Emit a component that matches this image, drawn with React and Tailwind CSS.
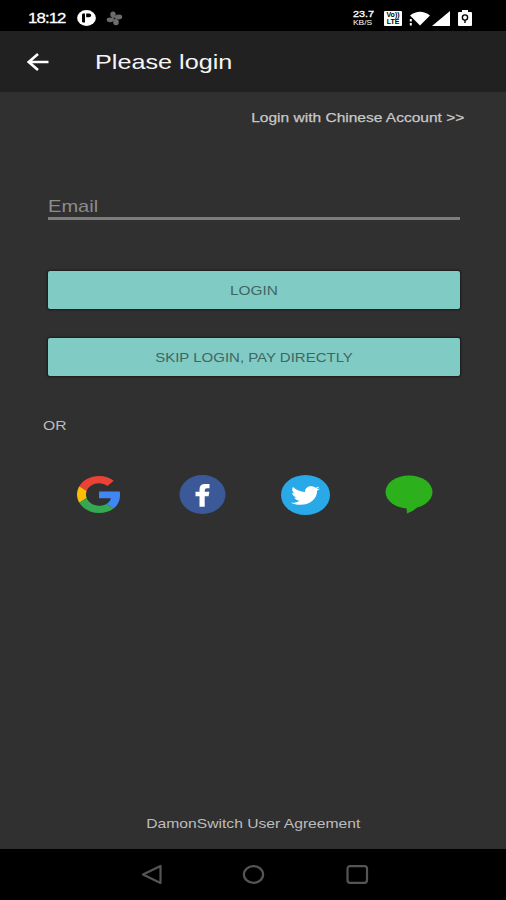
import { FaTwitter } from "react-icons/fa";
import clsx from "clsx";

// the whole screen uses a wide grotesque
const Wide = ({ className, children }) => (
  <span
    className={clsx("inline-block whitespace-nowrap leading-none", className)}
  >
    {children}
  </span>
);

const StatusBar = () => (
  <div className="h-[31px] shrink-0 bg-black flex items-center justify-between pl-7 pr-[34px] pt-[5px] text-white">
    <div className="flex items-center">
      <div className="w-[49px]">
        <Wide className="text-[15px] tracking-[-0.8px] origin-left scale-x-[1.12] [-webkit-text-stroke:0.3px_white]">
          18:12
        </Wide>
      </div>
      <svg width="19" height="16" viewBox="0 0 19 16">
        <ellipse cx="9.5" cy="8" rx="9.4" ry="7.9" fill="#fff" />
        <path d="M5 5Q5 3.6 6.4 3.6H8V12.6H6.4Q5 12.6 5 11.2Z" fill="#000" />
        <path d="M9.2 3.6H12Q14.2 3.6 14.2 5.4T12 7.2H9.2Z" fill="#000" />
      </svg>
      <svg width="17" height="15" viewBox="0 0 17 15" className="ml-[10px]">
        <g fill="#6c6c6c">
          <ellipse cx="7" cy="3.6" rx="2.7" ry="3" />
          <ellipse cx="12.7" cy="6" rx="3.5" ry="2.4" />
          <ellipse cx="10" cy="11.2" rx="2.8" ry="3" />
          <ellipse cx="4.2" cy="8.8" rx="3.5" ry="2.4" />
          <circle cx="8.5" cy="7.4" r="2.5" />
        </g>
        <circle cx="8.5" cy="7.4" r="1" fill="#222" />
      </svg>
    </div>
    <div className="flex items-center">
      <div className="w-[31px] flex flex-col items-start">
        <Wide className="text-[9px] leading-[8px] origin-left scale-x-[1.2] [-webkit-text-stroke:0.3px_white]">
          23.7
        </Wide>
        <Wide className="text-[7px] leading-[7px] origin-left scale-x-[1.2]">
          KB/S
        </Wide>
      </div>
      <div className="w-[18px] h-[15px] bg-white text-black rounded-[1px] flex flex-col items-center justify-center font-bold">
        <Wide className="text-[7px] leading-[7px]">Vo))</Wide>
        <Wide className="text-[7px] leading-[7px]">LTE</Wide>
      </div>
      <svg width="21" height="15" viewBox="0 0 21 15" className="ml-[7px]">
        <path d="M1 4.5Q11 -3 21 4.5L11 14.5Z" fill="#fff" />
        <path d="M0 7H4V15H0Z" fill="#000" />
        <path d="M1.8 8V10.5M1.8 12V14.5" stroke="#fff" strokeWidth="2" />
      </svg>
      <svg width="18" height="15" viewBox="0 0 18 15" className="ml-[2px]">
        <path d="M18 0V15H0Z" fill="#fff" />
      </svg>
      <svg width="14" height="16" viewBox="0 0 14 16" className="ml-2">
        <path d="M1 2H4V0H10V2H13Q14 2 14 3V15Q14 16 13 16H1Q0 16 0 15V3Q0 2 1 2Z" fill="#fff" />
        <ellipse cx="7" cy="7.5" rx="2.6" ry="2.6" fill="none" stroke="#000" strokeWidth="1.4" />
        <path d="M7 10V13" stroke="#000" strokeWidth="1.4" />
      </svg>
    </div>
  </div>
);

const Header = () => (
  <div className="h-[61px] shrink-0 bg-[#212121] flex items-center pl-[27px]">
    <svg width="22" height="18" viewBox="0 0 22 18" fill="none" stroke="#fff" strokeWidth="2.6">
      <path d="M1.5 9H21.5M11 1L1.7 9L11 17" />
    </svg>
    <Wide className="ml-[46px] text-[21px] text-[#f5f5f5] origin-left scale-x-[1.2]">
      Please login
    </Wide>
  </div>
);

const Button = ({ className, children }) => (
  <button className="h-[38px] w-full pt-[2px] rounded-[2px] bg-[#80cbc4] text-[#3f6663] shadow-[0_0_2px_1px_#1d1a1c] flex items-center justify-center">
    <Wide className={clsx("text-[13.5px]", className)}>{children}</Wide>
  </button>
);

const GoogleIcon = () => (
  <svg width="44" height="37" viewBox="0 0 48 48" preserveAspectRatio="none">
    <path fill="#EA4335" d="M24 9.5c3.54 0 6.71 1.22 9.21 3.6l6.85-6.85C35.9 2.38 30.47 0 24 0 14.62 0 6.51 5.38 2.56 13.22l7.98 6.19C12.43 13.72 17.74 9.5 24 9.5z" />
    <path fill="#4285F4" d="M46.98 24.55c0-1.57-.15-3.09-.38-4.55H24v9.02h12.94c-.58 2.96-2.26 5.48-4.78 7.18l7.73 6c4.51-4.18 7.09-10.36 7.09-17.65z" />
    <path fill="#FBBC05" d="M10.53 28.59c-.48-1.45-.76-2.99-.76-4.59s.27-3.14.76-4.59l-7.98-6.19C.92 16.46 0 20.12 0 24c0 3.88.92 7.54 2.56 10.78l7.97-6.19z" />
    <path fill="#34A853" d="M24 48c6.48 0 11.93-2.13 15.89-5.81l-7.73-6c-2.15 1.45-4.92 2.3-8.16 2.3-6.26 0-11.57-4.22-13.47-9.91l-7.98 6.19C6.51 42.62 14.62 48 24 48z" />
  </svg>
);

const Socials = () => (
  <div className="mt-[43px] pl-[77px] flex items-start">
    <div className="w-[102px] pt-px">
      <GoogleIcon />
    </div>
    <div className="w-[102px]">
      <svg width="47" height="39" viewBox="0 0 47 38" preserveAspectRatio="none">
        <ellipse cx="23.5" cy="19" rx="23" ry="19" fill="#3b5998" />
        <path
          d="M20.5 31V20.8H16.5V16.2H20.5V14Q20.5 8.8 26 8.8H30.5V13H28Q25.7 13 25.7 15V16.2H30.4L29.6 20.8H25.7V31Z"
          fill="#fff"
        />
      </svg>
    </div>
    <div className="w-[104px]">
      <div className="w-[49px] h-[40px] rounded-[50%] bg-[#2aa9e8] flex items-center justify-center">
        <FaTwitter
          className="w-[29px] h-[23px] mt-px text-white"
          preserveAspectRatio="none"
        />
      </div>
    </div>
    <svg width="48" height="39" viewBox="0 0 48 39">
      <ellipse cx="24" cy="17" rx="23.5" ry="16.5" fill="#2cb01c" />
      <path d="M21.5 32L22 38.5Q30 36 35 29Z" fill="#2cb01c" />
    </svg>
  </div>
);

const NavBar = () => (
  <div className="h-[51px] shrink-0 bg-black flex items-center pl-[141px]">
    <svg width="228" height="21" viewBox="0 0 228 21" fill="none" stroke="#555" strokeWidth="2.2">
      <path d="M2 10.5L19.5 2V19Z" strokeLinejoin="round" />
      <ellipse cx="112.5" cy="10.5" rx="9.6" ry="8.3" />
      <rect x="206.5" y="2.2" width="19.5" height="16.6" rx="2.5" />
    </svg>
  </div>
);

const App = () => {
  return (
    <div className="w-full h-[900px] flex flex-col overflow-hidden bg-[#303030] font-['Liberation_Sans',Arial,sans-serif]">
      <StatusBar />
      <Header />
      <div className="flex-1 flex flex-col">
        <div className="mt-[19px] pr-[42px] flex justify-end">
          <Wide className="text-[13.5px] text-[#c8c8c8] origin-right scale-x-[1.15] [-webkit-text-stroke:0.25px_#c8c8c8]">
            Login with Chinese Account &gt;&gt;
          </Wide>
        </div>

        {/* form */}
        <div className="mt-[70px] pl-12 pr-[46px] flex flex-col">
          <div className="h-[25px] border-b-3 border-[#7d7d7d]">
            <Wide className="text-[17px] text-[#8c8c8c] origin-left scale-x-[1.18]">
              Email
            </Wide>
          </div>
          <div className="mt-[51px] flex flex-col gap-[29px]">
            <Button className="scale-x-[1.14]">LOGIN</Button>
            <Button className="scale-x-[1.11]">SKIP LOGIN, PAY DIRECTLY</Button>
          </div>
        </div>

        <Wide className="mt-[43px] ml-[43px] text-[13.5px] text-[#bdbdbd] origin-left scale-x-[1.16]">
          OR
        </Wide>
        <Socials />

        <div className="mt-auto mb-[19px] flex justify-center">
          <Wide className="text-[13.5px] text-[#bdbdbd] scale-x-[1.16]">
            DamonSwitch User Agreement
          </Wide>
        </div>
      </div>
      <NavBar />
    </div>
  );
};

export default App;
